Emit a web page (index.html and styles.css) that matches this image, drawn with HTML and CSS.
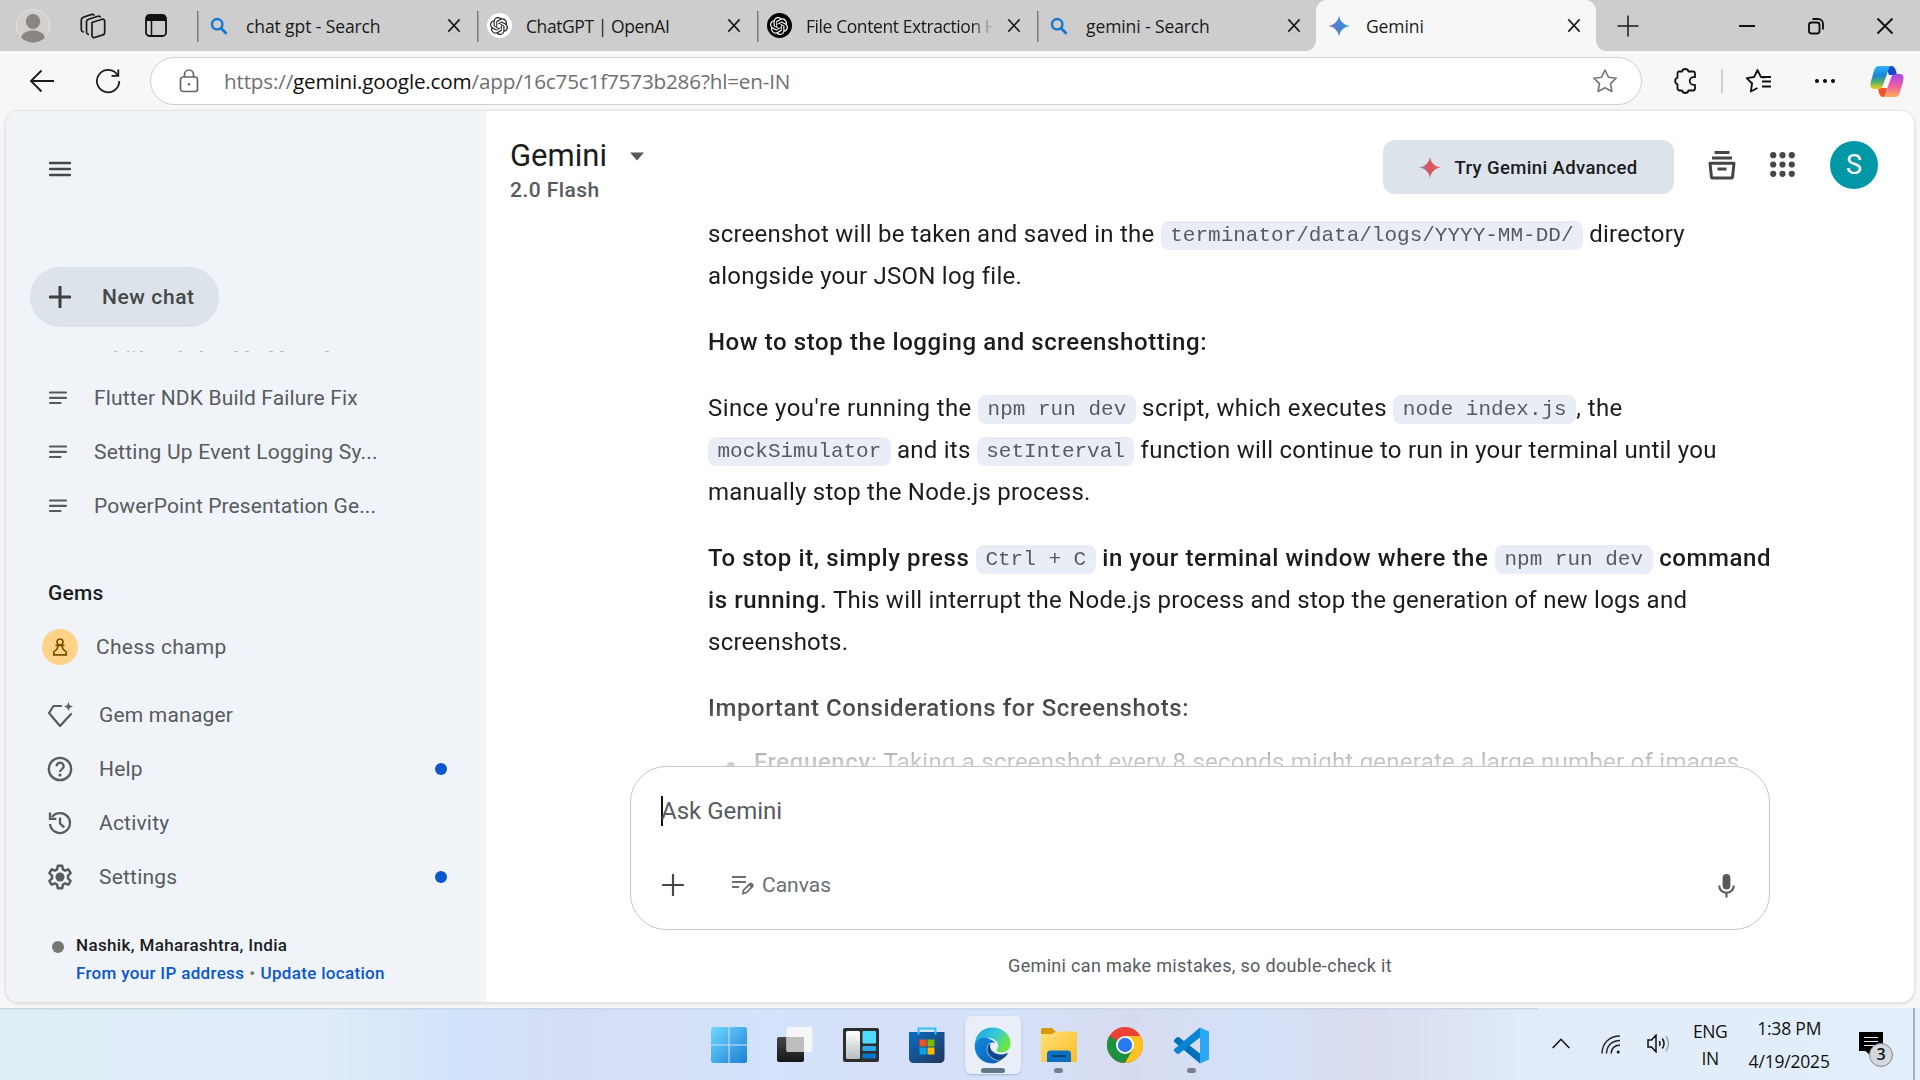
FILE: index.html
```html
<!DOCTYPE html>
<html lang="en">
<head>
<meta charset="utf-8">
<title>Gemini</title>
<link rel="stylesheet" href="styles.css">
</head>
<body>
<svg class="defs" width="0" height="0" aria-hidden="true">
  <defs>
    <linearGradient id="gSpark" x1="0" y1="0" x2="1" y2="0"><stop offset="0" stop-color="#9168c0"/><stop offset=".5" stop-color="#4a83d6"/><stop offset="1" stop-color="#1ba1e3"/></linearGradient>
    <linearGradient id="gSparkRed" x1="0" y1="0" x2="1" y2="0"><stop offset="0" stop-color="#8c7bd0"/><stop offset=".45" stop-color="#d6555c"/><stop offset="1" stop-color="#e8645a"/></linearGradient>
    <linearGradient id="gCopA" x1="0" y1="0" x2="0" y2="1"><stop offset="0" stop-color="#2fb5f5"/><stop offset=".4" stop-color="#1684d8"/><stop offset=".7" stop-color="#54b265"/><stop offset="1" stop-color="#f5cf1a"/></linearGradient>
    <linearGradient id="gCopB" x1="0" y1="0" x2="0" y2="1"><stop offset="0" stop-color="#a04be8"/><stop offset=".5" stop-color="#ee5aa5"/><stop offset="1" stop-color="#ffae57"/></linearGradient>
    <linearGradient id="gWin" x1="0" y1="0" x2="1" y2="1"><stop offset="0" stop-color="#72d8ff"/><stop offset="1" stop-color="#1b7fd6"/></linearGradient>
    <linearGradient id="gDark" x1="0" y1="0" x2="0" y2="1"><stop offset="0" stop-color="#474747"/><stop offset="1" stop-color="#161616"/></linearGradient>
    <linearGradient id="gGrey" x1="0" y1="0" x2="0" y2="1"><stop offset="0" stop-color="#ffffff"/><stop offset="1" stop-color="#b8bcc2"/></linearGradient>
    <linearGradient id="gStore" x1="0" y1="0" x2="1" y2="1"><stop offset="0" stop-color="#0a6cc0"/><stop offset="1" stop-color="#24355c"/></linearGradient>
    <linearGradient id="gEdgeTop" x1="0" y1="0" x2="1" y2=".5"><stop offset="0" stop-color="#1f9fd8"/><stop offset=".55" stop-color="#35c6dc"/><stop offset="1" stop-color="#6be83f"/></linearGradient>
    <linearGradient id="gEdgeLow" x1="0" y1="0" x2="1" y2="1"><stop offset="0" stop-color="#0f8ae0"/><stop offset="1" stop-color="#0b5cb3"/></linearGradient>
    <linearGradient id="gFolder" x1="0" y1="0" x2="1" y2="1"><stop offset="0" stop-color="#ffe07a"/><stop offset="1" stop-color="#fbbd26"/></linearGradient>
    <symbol id="close" viewBox="0 0 14 16"><path d="M1 1.500l12 13M13 1.500L1 14.500" fill="none" stroke="#1a1a1a" stroke-width="1.700"/></symbol>
    <symbol id="search" viewBox="0 0 18 18"><circle cx="7.200" cy="7.200" r="5.200" fill="none" stroke="#1577d2" stroke-width="2.400"/><path d="M11 11l4.800 5" stroke="#1577d2" stroke-width="2.800" stroke-linecap="round"/></symbol>
    <symbol id="spark" viewBox="0 0 24 24"><path d="M12 0C12.600 6.600 17.400 11.400 24 12 17.400 12.600 12.600 17.400 12 24 11.400 17.400 6.600 12.600 0 12 6.600 11.400 11.400 6.600 12 0Z"/></symbol>
    <symbol id="knot" viewBox="0 0 24 24"><path fill="currentColor" d="M22.282 9.821a5.985 5.985 0 0 0-.516-4.910 6.046 6.046 0 0 0-6.510-2.900A6.065 6.065 0 0 0 4.981 4.182a5.985 5.985 0 0 0-3.998 2.900 6.046 6.046 0 0 0 .743 7.097 5.980 5.980 0 0 0 .511 4.911 6.051 6.051 0 0 0 6.515 2.900A5.985 5.985 0 0 0 13.260 24a6.056 6.056 0 0 0 5.772-4.206 5.990 5.990 0 0 0 3.998-2.900 6.056 6.056 0 0 0-.748-7.073zM13.260 22.430a4.476 4.476 0 0 1-2.876-1.041l.142-.080 4.778-2.758a.795.795 0 0 0 .393-.681v-6.737l2.020 1.169a.071.071 0 0 1 .038.052v5.583a4.504 4.504 0 0 1-4.495 4.493zM3.600 18.304a4.471 4.471 0 0 1-.535-3.014l.142.085 4.783 2.759a.771.771 0 0 0 .780 0l5.843-3.369v2.332a.080.080 0 0 1-.033.062L9.740 19.950a4.500 4.500 0 0 1-6.140-1.646zM2.340 7.896a4.485 4.485 0 0 1 2.366-1.973V11.600a.766.766 0 0 0 .388.677l5.815 3.354-2.020 1.169a.076.076 0 0 1-.071 0l-4.830-2.787A4.504 4.504 0 0 1 2.340 7.872zm16.597 3.855l-5.833-3.387L15.119 7.200a.076.076 0 0 1 .071 0l4.830 2.791a4.494 4.494 0 0 1-.676 8.105v-5.678a.790.790 0 0 0-.407-.667zm2.010-3.023l-.141-.085-4.774-2.782a.776.776 0 0 0-.785 0L9.409 9.230V6.897a.066.066 0 0 1 .028-.061l4.830-2.787a4.500 4.500 0 0 1 6.680 4.660zM8.307 12.863l-2.020-1.164a.080.080 0 0 1-.038-.057V6.075a4.500 4.500 0 0 1 7.375-3.453l-.142.080L8.704 5.460a.795.795 0 0 0-.393.681zm1.097-2.365l2.602-1.500 2.607 1.500v2.999l-2.597 1.500-2.607-1.500z"/></symbol>
    <symbol id="lines" viewBox="0 0 18 14"><path d="M1 1.500h16M1 6.800h16M1 12h10.500" stroke="#575b5f" stroke-width="2.200" stroke-linecap="round"/></symbol>
  </defs>
</svg>

<div class="tabstrip">
  <div class="strip-tools">
    <svg width="34" height="34" viewBox="0 0 34 34"><circle cx="17" cy="17" r="16.500" fill="#d2d0cc" stroke="#e4e3e0"/><ellipse cx="17" cy="12.500" rx="7.200" ry="7.500" fill="#8b8681"/><path d="M5 28.500C7 23.500 11 21.500 17 21.500S27 23.500 29 28.500A16.500 16.500 0 0 1 5 28.500Z" fill="#8b8681"/></svg>
    <svg width="26" height="26" viewBox="0 0 26 26" fill="none" stroke="#1a1a1a" stroke-width="1.700"><path d="M12 9.500l10-3.200a2 2 0 0 1 2.700 1.900v11.300a2.500 2.500 0 0 1-1.800 2.400l-8.300 2.600A2 2 0 0 1 12 22.600Z"/><path d="M9 21.500a2.500 2.500 0 0 1-2.500-2.500V9a3 3 0 0 1 2-2.800l9.500-3a2.200 2.200 0 0 1 2.600 1.300"/><path d="M3.800 19a2.500 2.500 0 0 1-2.500-2.500V7a3 3 0 0 1 2-2.800l8.500-2.800a2.200 2.200 0 0 1 2.600 1.200"/></svg>
    <svg width="22" height="23" viewBox="0 0 22 23"><rect x="1" y="1" width="20" height="21" rx="3.500" fill="none" stroke="#111" stroke-width="1.800"/><path d="M1 7V4a3 3 0 0 1 3-3h14a3 3 0 0 1 3 3v3Z" fill="#111"/><path d="M6.500 7v15" stroke="#111" stroke-width="1.500"/></svg>
  </div>
  <div class="tab"><span class="fav"><svg width="18" height="18"><use href="#search"/></svg></span><span class="tab-title">chat gpt - Search</span><svg width="14" height="15"><use href="#close"/></svg></div>
  <div class="tab"><span class="fav"><span class="disc light"><svg width="18" height="18"><use href="#knot"/></svg></span></span><span class="tab-title tight">ChatGPT | OpenAI</span><svg width="14" height="15"><use href="#close"/></svg></div>
  <div class="tab"><span class="fav"><span class="disc dark"><svg width="18" height="18"><use href="#knot"/></svg></span></span><span class="tab-title tight faded">File Content Extraction H</span><svg width="14" height="15"><use href="#close"/></svg></div>
  <div class="tab"><span class="fav"><svg width="18" height="18"><use href="#search"/></svg></span><span class="tab-title">gemini - Search</span><svg width="14" height="15"><use href="#close"/></svg></div>
  <div class="tab active"><span class="fav"><svg width="22" height="24" fill="url(#gSpark)"><use href="#spark"/></svg></span><span class="tab-title">Gemini</span><svg width="14" height="15"><use href="#close"/></svg></div>
  <svg class="newtab" width="22" height="22" viewBox="0 0 22 22"><path d="M11 .5v21M.5 11h21" stroke="#1a1a1a" stroke-width="1.500"/></svg>
  <div class="winbtns">
    <svg width="18" height="18" viewBox="0 0 18 18"><path d="M1 9h16" stroke="#111" stroke-width="2"/></svg>
    <svg width="18" height="18" viewBox="0 0 18 18" fill="none" stroke="#111" stroke-width="1.900"><rect x="2" y="5.500" width="10.500" height="11" rx="2.500"/><path d="M5.500 2h5.500a5 5 0 0 1 5 5v5.500"/></svg>
    <svg width="18" height="18" viewBox="0 0 18 18"><path d="M1.500 1.500l15 15M16.500 1.500l-15 15" stroke="#111" stroke-width="1.900"/></svg>
  </div>
</div>

<div class="toolbar">
  <svg width="26" height="24" viewBox="0 0 26 24" fill="none" stroke="#1a1a1a" stroke-width="1.800"><path d="M25 12H2M12.500 1.500L2 12l10.500 10.500"/></svg>
  <svg class="reload" width="26" height="26" viewBox="0 0 26 26" fill="none" stroke="#1a1a1a" stroke-width="1.800"><path d="M22.500 7A11.200 11.200 0 1 0 24.300 13"/><path d="M23.300 1.500V7.800H16.500"/></svg>
  <div class="omnibox">
    <svg width="20" height="24" viewBox="0 0 20 24" fill="none" stroke="#666" stroke-width="1.700"><rect x="1.500" y="8" width="17" height="14.500" rx="2.500"/><path d="M5.500 8V5.500a4.500 4.500 0 0 1 9 0V8"/><circle cx="10" cy="15.200" r="1.200" fill="#666" stroke="none"/></svg>
    <span class="url">https://<b>gemini.google.com</b>/app/16c75c1f7573b286?hl=en-IN</span>
    <svg width="26" height="26" viewBox="0 0 26 26" fill="none" stroke="#767676" stroke-width="1.600" stroke-linejoin="round"><path d="M13 2l3.400 7.200 7.800 1-5.700 5.500 1.400 7.800L13 19.700l-6.900 3.800 1.400-7.800L1.800 10.200l7.800-1Z"/></svg>
  </div>
  <div class="tb-icons">
    <svg width="26" height="28" viewBox="0 0 26 28" fill="none" stroke="#111" stroke-width="1.800" stroke-linejoin="round"><path d="M6.500 4.500h3.600a3.300 3.300 0 0 1 6.400 0H21a2 2 0 0 1 2 2v3.700h-1.500a3.800 3.800 0 0 0 0 7.600H23v3.700a2 2 0 0 1-2 2h-4.500a3.300 3.300 0 0 1-6.400 0H7.500a2 2 0 0 1-2-2v-4.200a3.500 3.500 0 0 1 0-6.600V6.500a2 2 0 0 1 1-2Z"/></svg>
    <i class="vr"></i>
    <svg width="27" height="26" viewBox="0 0 27 26" fill="none" stroke="#111" stroke-width="1.800" stroke-linejoin="round"><path d="M20 9.500l-4.100-.5L12.500 2 9.200 9l-7.500 1.100 5.400 5.400-1.300 8 6.700-3.500M17 13.500h9M17 18.500h9M16 9h10"/></svg>
    <svg width="22" height="6" viewBox="0 0 22 6"><circle cx="3" cy="3" r="2"/><circle cx="11" cy="3" r="2"/><circle cx="19" cy="3" r="2"/></svg>
    <svg width="34" height="31" viewBox="0 0 34 31"><path d="M16 0h5c3 0 4 2 5 5l1 4h-8Z" fill="#1747c9"/><path d="M8 22h9l-2 9h-2c-3 0-4-3-5-9Z" fill="#f0552f"/><path d="M9 0h12c-2 1-3 4-4 8l-4 11c-1 3-2 4-5 4H4c-4 0-4-4-3-8L4 5c1-3 2-5 5-5Z" fill="url(#gCopA)"/><path d="M25 31H13c2-1 3-4 4-8l4-11c1-3 2-4 5-4h4c4 0 4 4 3 8l-3 10c-1 3-2 5-5 5Z" fill="url(#gCopB)"/></svg>
  </div>
</div>

<div class="frame">
  <div class="panel">
    <aside class="sidebar">
      <svg class="burger" width="22" height="16" viewBox="0 0 22 16"><path d="M1 2h20M1 8h20M1 14h20" stroke="#444746" stroke-width="2.400" stroke-linecap="round"/></svg>
      <div class="newchat"><svg width="22" height="22" viewBox="0 0 22 22"><path d="M11 1v20M1 11h20" stroke="#3c403f" stroke-width="3" stroke-linecap="round"/></svg><span>New chat</span></div>
      <svg class="cutrow" width="240" height="1" viewBox="0 0 240 1"><path d="M20 .5h3M33 .5h2M39 .5h2M46 .5h3M85 .5h3M106 .5h3M140 .5h4M151 .5h4M175 .5h4M186 .5h4M231 .5h4" stroke="#b9bdc2"/></svg>
      <div class="row chat"><svg width="18" height="14"><use href="#lines"/></svg><span>Flutter NDK Build Failure Fix</span></div>
      <div class="row chat"><svg width="18" height="14"><use href="#lines"/></svg><span class="loose">Setting Up Event Logging Sy...</span></div>
      <div class="row chat"><svg width="18" height="14"><use href="#lines"/></svg><span class="snug">PowerPoint Presentation Ge...</span></div>
      <h2 class="gems">Gems</h2>
      <div class="row gem"><span class="pawn"><svg width="16" height="18" viewBox="0 0 16 18" fill="none" stroke="#7a4f00" stroke-width="1.700"><circle cx="8" cy="4" r="3"/><path d="M3.500 7.300h9M6.300 7.500L5 11 1.800 14v2.800h12.400V14L11 11 9.700 7.500"/></svg></span><span>Chess champ</span></div>
      <div class="menu">
        <div class="row nav"><svg width="26" height="26" viewBox="0 0 26 26"><path d="M14 4H6.500L2 11l11 13 11-12" fill="none" stroke="#575b5f" stroke-width="2.200" stroke-linejoin="round" stroke-linecap="round"/><path d="M21.500 0l1.200 3.300L26 4.500l-3.300 1.200L21.500 9l-1.200-3.300L17 4.500l3.300-1.200Z" fill="#575b5f"/></svg><span>Gem manager</span></div>
        <div class="row nav"><svg width="26" height="26" viewBox="0 0 26 26" fill="none" stroke="#575b5f" stroke-width="2.300"><circle cx="13" cy="13" r="11.200"/><path d="M9.600 10.200a3.500 3.500 0 1 1 5.600 2.700c-1.400 1-2.100 1.600-2.100 3"/><circle cx="13" cy="19" r="1.600" fill="#575b5f" stroke="none"/></svg><span>Help</span><i class="dot"></i></div>
        <div class="row nav"><svg width="26" height="26" viewBox="0 0 26 26" fill="none" stroke="#575b5f" stroke-width="2.300"><path d="M3 14A10 10 0 1 0 5 7"/><path d="M3 2.500v6.300h6.300M13 7.500v6l4.300 3.800"/></svg><span>Activity</span></div>
        <div class="row nav"><svg width="26" height="26" viewBox="0 0 26 26" fill="none" stroke="#575b5f" stroke-width="2.500" stroke-linejoin="round"><path d="M10.800 1.800h4.400l.7 3.500 2.200 1.300 3.300-1.200 2.200 3.800-2.600 2.400v2.800l2.600 2.400-2.200 3.800-3.300-1.200-2.200 1.300-.7 3.500h-4.400l-.7-3.500-2.200-1.300-3.300 1.200-2.200-3.800L5 14.400v-2.800L2.400 9.200l2.200-3.800 3.300 1.200 2.200-1.300Z"/><circle cx="13" cy="13" r="4.500" fill="#575b5f" stroke="none"/></svg><span>Settings</span><i class="dot"></i></div>
      </div>
      <div class="location">
        <i class="geo"></i>
        <div><div class="place">Nashik, Maharashtra, India</div><div class="links"><a>From your IP address</a><i>•</i><a>Update location</a></div></div>
      </div>
    </aside>

    <main class="main">
      <header class="top">
        <div class="brand">
          <div class="name">Gemini<svg width="14" height="9" viewBox="0 0 14 9"><path d="M0 .5h14L7 8.500Z" fill="#575b5f"/></svg></div>
          <div class="model">2.0 Flash</div>
        </div>
        <div class="actions">
          <div class="try"><svg width="22" height="25" viewBox="0 0 24 24" fill="url(#gSparkRed)"><use href="#spark"/></svg><span>Try Gemini Advanced</span></div>
          <svg width="28" height="29" viewBox="0 0 28 29" fill="none" stroke="#444746" stroke-width="3"><path d="M6.500 1.600h15M4 7h20"/><path d="M2 12.200h24l-1.400 13.500a1.500 1.500 0 0 1-1.500 1.400H4.900a1.500 1.500 0 0 1-1.500-1.400Z" stroke-linejoin="round"/><path d="M9.500 18h9"/></svg>
          <svg width="25" height="25" viewBox="0 0 25 25" fill="#444746"><circle cx="3.200" cy="3.200" r="3.100"/><circle cx="12.500" cy="3.200" r="3.100"/><circle cx="21.800" cy="3.200" r="3.100"/><circle cx="3.200" cy="12.500" r="3.100"/><circle cx="12.500" cy="12.500" r="3.100"/><circle cx="21.800" cy="12.500" r="3.100"/><circle cx="3.200" cy="21.800" r="3.100"/><circle cx="12.500" cy="21.800" r="3.100"/><circle cx="21.800" cy="21.800" r="3.100"/></svg>
          <div class="avatar">S</div>
        </div>
      </header>

      <section class="chatview">
        <p>screenshot will be taken and saved in the <code>terminator/data/logs/YYYY-MM-DD/</code> directory<br>alongside your JSON log file.</p>
        <p><b>How to stop the logging and screenshotting:</b></p>
        <p><span class="airy">Since you're running the <code>npm run dev</code> script, which executes <code>node index.js</code>, the</span><br><code>mockSimulator</code> and its <code>setInterval</code> function will continue to run in your terminal until you<br>manually stop the Node.js process.</p>
        <p><b>To stop it, simply press <code>Ctrl + C</code> in your terminal window where the <code>npm run dev</code> command<br>is running.</b> This will interrupt the Node.js process and stop the generation of new logs and<br>screenshots.</p>
        <p class="last"><b>Important Considerations for Screenshots:</b></p>
        <ul><li><b>Frequency:</b> Taking a screenshot every 8 seconds might generate a large number of images</li></ul>
      </section>

      <div class="composer">
        <div class="prompt"><i class="caret"></i>Ask Gemini</div>
        <div class="tools">
          <svg width="22" height="22" viewBox="0 0 22 22"><path d="M11 1v20M1 11h20" stroke="#444746" stroke-width="2.200" stroke-linecap="round"/></svg>
          <svg class="canvas-i" width="23" height="20" viewBox="0 0 23 20"><path d="M1 2h14M1 7h14M1 12h7" stroke="#6b6f73" stroke-width="2.200"/><path d="M12 18.500l.6-3.400 6.300-6.300c1.500-1 3.700 1 2.600 2.700l-6.300 6.300Z" fill="none" stroke="#6b6f73" stroke-width="1.800"/><path d="M17.500 10l2-2 3 3-2 2Z" fill="#6b6f73"/></svg>
          <span>Canvas</span>
          <svg class="mic" width="17" height="25" viewBox="0 0 17 25"><rect x="4.600" y="1" width="7.800" height="15.500" rx="3.900" fill="#575b5f"/><path d="M1.200 12.500a7.300 7.300 0 0 0 14.600 0M8.500 20v4.500" fill="none" stroke="#575b5f" stroke-width="2.100"/></svg>
        </div>
      </div>
      <div class="note">Gemini can make mistakes, so double-check it</div>
    </main>
  </div>
</div>

<footer class="taskbar">
  <div class="apps">
    <span class="app"><svg width="36" height="36" viewBox="0 0 36 36" fill="url(#gWin)"><path d="M2.500 0H17.500V17.500H0V2.500A2.500 2.500 0 0 1 2.500 0ZM18.500 0H33.500A2.500 2.500 0 0 1 36 2.500V17.500H18.500ZM0 18.500H17.500V36H2.500A2.500 2.500 0 0 1 0 33.500ZM18.500 18.500H36V33.500A2.500 2.500 0 0 1 33.500 36H18.500Z"/></svg></span>
    <span class="app"><svg width="36" height="36" viewBox="0 0 36 36"><rect x="0" y="10" width="27" height="25" rx="2" fill="url(#gDark)"/><rect x="9.500" y="0" width="26" height="25" rx="2" fill="#f7f7f8" opacity=".96"/><path d="M9.500 10H27v15H11a1.500 1.500 0 0 1-1.500-1.500Z" fill="#bdbdbd"/></svg></span>
    <span class="app"><svg width="36" height="34" viewBox="0 0 36 34"><rect width="36" height="34" rx="2" fill="#2d2f2d"/><rect x="3" y="3" width="14" height="28" rx="1.500" fill="url(#gGrey)"/><rect x="19.500" y="3" width="13.500" height="12.500" rx="1" fill="#4edbff"/><rect x="19.500" y="18" width="13.500" height="5" rx="1" fill="#2ea9e8"/><rect x="19.500" y="25.500" width="13.500" height="5" rx="1" fill="#0a74d1"/></svg></span>
    <span class="app"><svg width="36" height="36" viewBox="0 0 36 36"><path d="M0 5h35.500v26.500A4.500 4.500 0 0 1 31 36H4.500A4.500 4.500 0 0 1 0 31.500Z" fill="url(#gStore)"/><path d="M9.500 7.500V1.500h17v6" fill="none" stroke="#2fc3f3" stroke-width="2"/><path d="M10.500 12.500h7v7h-7Z" fill="#f25022"/><path d="M18.500 12.500h7v7h-7Z" fill="#7fba00"/><path d="M10.500 20.500h7v7h-7Z" fill="#00a4ef"/><path d="M18.500 20.500h7v7h-7Z" fill="#ffb900"/></svg></span>
    <span class="app current"><svg width="37" height="37" viewBox="0 0 37 37"><path d="M1 16C2 6 10 .5 18.500 .5 29 .5 36.500 8 36.500 16c0 6-4 9.500-9 9.500-4 0-5.500-1.500-4.500-3 1-1.500 1.500-3 1-5-1-4-5-6.500-10-6.500C8 11 3 13 1 16Z" fill="url(#gEdgeTop)"/><path d="M1 16c2-4 7-6 12-5 4 1 7 3 8.500 5-6-2-10 3-8.500 8.500 1.500 6 7.500 9.500 13.500 9-3 2-5.500 3-8 3C8 36.500-1 28 1 16Z" fill="url(#gEdgeLow)"/><path d="M13.500 20c-1.500 7 4 12.500 12.500 13.500 3-1.500 5.500-3.500 7.500-6.500.4-.8-.3-1.200-1-.8-4 2-10 1.500-13.500-1.500-2.500-2-3.500-4.500-2.500-8-1.500.5-2.500 1.500-3 3.300Z" fill="#114a8b"/></svg><i></i></span>
    <span class="app run"><svg width="36" height="34" viewBox="0 0 36 34"><path d="M0 2a2 2 0 0 1 2-2h9l4 4h21v6H0Z" fill="#d99a00"/><path d="M0 6h11l4-2.500h21V34H0Z" fill="url(#gFolder)"/><path d="M6 34V26a3.500 3.500 0 0 1 3.500-3.500h17A3.500 3.500 0 0 1 30 26v8Z" fill="#0c70c0"/><path d="M11 28h14" stroke="#083f7d" stroke-width="2"/></svg><i></i></span>
    <span class="app"><svg width="36" height="36" viewBox="0 0 36 36"><circle cx="18" cy="18" r="18" fill="#ea4335"/><path d="M18 18L2.400 9A18 18 0 0 0 18 36L25.800 22.500Z" fill="#1e9141"/><path d="M18 9H33.600A18 18 0 0 1 18 36L25.800 22.500Z" fill="#fcc31f"/><circle cx="18" cy="18" r="9" fill="#fff"/><circle cx="18" cy="18" r="7.200" fill="#2b79ee"/></svg></span>
    <span class="app run"><svg width="36" height="37" viewBox="0 0 36 37"><path d="M1.500 12.500L4 10.300a1.600 1.600 0 0 1 2 0L27 26.500v10L1.300 15a1.800 1.800 0 0 1 .2-2.500Z" fill="#0070bb"/><path d="M1.500 24.500L4 26.700a1.600 1.600 0 0 0 2 0L27 10.500V.5L1.300 22a1.800 1.800 0 0 0 .2 2.500Z" fill="#0a84cf"/><path d="M27 .5L36 4.500v28L27 36.500Z" fill="#29a9f5"/></svg><i></i></span>
  </div>
  <div class="tray">
    <svg class="t1" width="18" height="11" viewBox="0 0 18 11"><path d="M.7 10L9 1.300 17.300 10" fill="none" stroke="#111" stroke-width="1.600"/></svg>
    <svg class="t2" width="20" height="19" viewBox="0 0 20 19" fill="none" stroke="#222" stroke-width="1.400"><path d="M1 18.500C1.200 8.500 8 1 19 1M5.500 18.500C5.700 11 10.500 5.700 19 5.500M10.200 18.500c.2-5 3-8.200 8.800-8.500"/><circle cx="17.200" cy="17" r="1.500" fill="#111" stroke="none"/></svg>
    <svg class="t3" width="23" height="19" viewBox="0 0 23 19" fill="none" stroke="#111" stroke-width="1.500"><path d="M1 6h3.500L9 1.200v16.600L4.500 13H1ZM12.300 7.200q1.500 2.300 0 4.600M15.300 4.500q3.500 5 0 10"/><path d="M19 2q5 7.500 0 15" stroke="#9aa3ab"/></svg>
    <div class="lang"><span>ENG</span><span>IN</span></div>
    <div class="clock"><span>1:38 PM</span><span>4/19/2025</span></div>
    <div class="notif"><svg width="24" height="24" viewBox="0 0 24 24"><path d="M0 0h24v19H12v5L6.500 19H0Z"/><path d="M5 5.500h14M5 9.500h14M5 13.500h14" stroke="#e2edf8" stroke-width="1.200"/></svg><b>3</b></div>
    <i class="peek"></i>
  </div>
</footer>
</body>
</html>
```

FILE: styles.css
```css
* { box-sizing: border-box; }
html, body { margin: 0; width: 1920px; height: 1080px; overflow: hidden; }
body { display: flex; flex-direction: column; background: #f7f7f7; font-family: Roboto, "Liberation Sans", sans-serif; color: #1b1c1d; }
svg { display: block; flex: none; }
i { font-style: normal; flex: none; }
.defs { position: absolute; }

/* tab strip */
.tabstrip { height: 51px; flex: none; display: flex; align-items: center; background: #cdcdcd; font-family: "Open Sans", "Noto Sans", sans-serif; }
.strip-tools { width: 196px; flex: none; display: flex; align-items: center; padding-left: 16px; }
.strip-tools svg:nth-child(2) { margin-left: 30px; }
.strip-tools svg:nth-child(3) { margin-left: 39px; }
.tab { width: 280px; height: 51px; flex: none; display: flex; align-items: center; padding-right: 15px; background: linear-gradient(#7b7b7b, #7b7b7b) .5px 11px / 1.500px 31px no-repeat; }
.fav { width: 46px; flex: none; display: flex; justify-content: center; }
.disc { width: 25px; height: 25px; border-radius: 50%; display: flex; align-items: center; justify-content: center; }
.light { background: #fff; color: #222; }
.dark { background: #000; color: #fff; }
.tab-title { flex: 1; min-width: 0; margin-left: 4px; overflow: hidden; white-space: nowrap; font-size: 17.500px; letter-spacing: -.1px; color: #1a1a1a; line-height: 30px; }
.tight { letter-spacing: -.42px; }
.faded { margin-right: 13px; -webkit-mask-image: linear-gradient(90deg, #000 88%, transparent); mask-image: linear-gradient(90deg, #000 88%, transparent); }
.active { background: #f7f7f7; border-radius: 11px 11px 0 0; position: relative; }
.active::before, .active::after { content: ""; position: absolute; bottom: 0; width: 10px; height: 10px; }
.active::before { left: -10px; background: radial-gradient(circle at 0 0, transparent 9.500px, #f7f7f7 10px); }
.active::after { right: -10px; background: radial-gradient(circle at 100% 0, transparent 9.500px, #f7f7f7 10px); }
.newtab { margin-left: 21px; }
.winbtns { margin-left: auto; padding-right: 26px; display: flex; gap: 51px; }

/* address toolbar */
.toolbar { height: 59px; flex: none; display: flex; align-items: center; padding: 1px 0 0 29px; }
.reload { margin-left: 40px; }
.omnibox { width: 1492px; height: 48px; margin-left: 29px; display: flex; align-items: center; padding: 0 23px 0 28px; background: #fff; border: 1.500px solid #cfcfcf; border-radius: 24px; }
.url { flex: 1; margin-left: 25px; font-family: "Open Sans", "Noto Sans", sans-serif; font-size: 20.700px; letter-spacing: -.19px; color: #6f6f6f; white-space: nowrap; }
.url b { font-weight: 400; color: #111; }
.tb-icons { display: flex; align-items: center; flex: 1; padding-left: 30px; }
.vr { width: 1.500px; height: 24px; margin: 0 22px 0 23px; background: #cfcfcf; }
.tb-icons svg:nth-child(4) { margin-left: 42px; }
.tb-icons svg:nth-child(5) { margin-left: 34px; }

/* page frame */
.frame { height: 898px; flex: none; padding: 0 5px 6px; }
.panel { height: 893px; display: flex; background: #fff; border: 1px solid #e4e4e4; border-radius: 14px; overflow: hidden; box-shadow: 0 1px 3px rgba(0, 0, 0, .12); }

/* sidebar */
.sidebar { width: 480px; flex: none; background: #f0f4f9; padding: 50px 0 0 24px; font-size: 21px; color: #575b5f; }
.burger { margin-left: 19px; }
.newchat { width: 189px; height: 60px; margin-top: 90px; padding-left: 19px; display: flex; align-items: center; gap: 31px; border-radius: 30px; background: #dde3ea; font-weight: 500; letter-spacing: .6px; color: #444746; white-space: nowrap; }
.cutrow { margin: 24px 0 19px 64px; }
.row { height: 54px; display: flex; align-items: center; white-space: nowrap; }
.chat { padding-left: 19px; }
.chat span { margin-left: 27px; letter-spacing: .15px; }
.chat .loose { letter-spacing: .24px; }
.chat .snug { letter-spacing: .11px; }
.gems { margin: 47px 0 13px 18px; font-size: 21px; line-height: 27px; font-weight: 500; letter-spacing: .2px; color: #1b1c1d; }
.gem { padding-left: 12px; }
.pawn { width: 36px; height: 36px; display: flex; align-items: center; justify-content: center; border-radius: 50%; background: #ffd28a; }
.gem span + span { margin-left: 18px; letter-spacing: .28px; }
.menu { margin-top: 14px; }
.nav { padding-left: 17px; letter-spacing: .2px; }
.nav span { flex: 1; margin-left: 26px; }
.dot { width: 12px; height: 12px; margin-right: 39px; border-radius: 50%; background: #0b57d0; }
.location { margin-top: 27px; padding-left: 22px; display: flex; gap: 12px; font-size: 17px; line-height: 28px; font-weight: 500; white-space: nowrap; }
.geo { width: 12px; height: 12px; margin-top: 10px; border-radius: 50%; background: #747775; }
.place { color: #1b1c1d; letter-spacing: .35px; }
.links { color: #0b57d0; letter-spacing: .32px; }
.links i { margin: 0 5px; color: #747775; }

/* main column */
.main { flex: 1; min-width: 0; display: flex; flex-direction: column; }
.top { height: 99px; flex: none; display: flex; justify-content: space-between; padding: 25px 36px 0 24px; }
.name { display: flex; align-items: center; gap: 23px; font-size: 31px; line-height: 38px; margin-top: 1px; }
.model { margin-top: 3px; font-size: 21px; line-height: 24px; font-weight: 500; letter-spacing: .45px; color: #575b5f; }
.actions { display: flex; align-items: flex-start; }
.actions > svg { margin-top: 16px; margin-left: 34px; }
.actions > .try + svg { margin-top: 15px; }
.try { width: 291px; height: 54px; margin-top: 4px; padding-top: 1px; display: flex; align-items: center; justify-content: center; gap: 13px; border-radius: 12px; background: #dde3ea; font-size: 18.500px; font-weight: 500; letter-spacing: .38px; white-space: nowrap; }
.avatar { width: 48px; height: 48px; margin: 5px 0 0 35px; border-radius: 50%; background: #0097a7; color: #fff; font-size: 27px; line-height: 48px; text-align: center; }

.chatview { height: 556px; flex: none; padding: 3px 0 0 222px; overflow: hidden; font-size: 24px; line-height: 42px; letter-spacing: .24px; white-space: nowrap;
  -webkit-mask-image: linear-gradient(#000 83%, rgba(0, 0, 0, .8) 89.500%, rgba(0, 0, 0, .2) 100%); mask-image: linear-gradient(#000 83%, rgba(0, 0, 0, .8) 89.500%, rgba(0, 0, 0, .2) 100%); }
.chatview p { margin: 0 0 24px; }
.chatview p.last { margin-bottom: 12px; }
.chatview b { font-weight: 500; letter-spacing: .59px; }
.chatview .airy { letter-spacing: .42px; }
.chatview code { display: inline-block; height: 29px; padding: 0 9.500px; vertical-align: middle; border-radius: 8px; background: #e9eef6; font: 400 21px/29px "Liberation Mono", monospace; letter-spacing: 0; color: #575b5f; }
.chatview ul { margin: 0; padding-left: 19px; list-style: none; }
.chatview li { display: flex; align-items: center; white-space: pre; }
.chatview li::before { content: ""; width: 8px; height: 8px; margin: 7px 19px 0 0; border-radius: 50%; background: #1b1c1d; }

.composer { width: 1140px; height: 164px; flex: none; margin-left: 144px; padding: 24px 34px 0 30px; border: 1px solid #c4c7c5; border-radius: 36px; }
.prompt { display: flex; align-items: center; height: 40px; font-size: 24px; color: #575b5f; }
.caret { width: 2px; height: 30px; margin-right: -2px; background: #111; }
.tools { display: flex; align-items: center; height: 40px; margin-top: 34px; padding-left: 1px; font-size: 21px; color: #6b6f73; }
.canvas-i { margin-left: 47px; }
.tools span { margin-left: 8px; }
.mic { margin-left: auto; }
.note { margin: 24px 0 0 144px; width: 1140px; text-align: center; font-size: 18px; line-height: 24px; letter-spacing: .33px; color: #575b5f; }

/* taskbar */
.taskbar { height: 72px; flex: none; display: flex; font-family: "Open Sans", "Noto Sans", sans-serif; background: linear-gradient(#c9d5e8, #c9d5e8) 0 0 / 1538px 1.500px no-repeat, linear-gradient(90deg, #e0eef8 0, #e0edf8 17%, #d0e2fa 24%, #d5def6 29%, #d5dff7 35%, #d2e3fb 40%, #d6dff7 46%, #d5e1fa 52%, #d6dcef 59%, #d5e1f9 65%, #d8dcee 71%, #dce4f4 76%, #e1ecf8 79%, #e2eef9 100%); }
.apps { display: flex; gap: 10.100px; margin-left: 700.500px; padding-top: 8px; }
.app { width: 56px; height: 58px; display: flex; flex-direction: column; align-items: center; justify-content: center; border-radius: 6px; position: relative; }
.current { background: #e9eef9; box-shadow: 0 1px 2px rgba(80, 100, 150, .35); }
.app i { position: absolute; bottom: 1px; width: 9px; height: 5px; border-radius: 3px; background: #7b7f8b; }
.current i { width: 24px; background: #5f7884; }
.tray { flex: 1; display: flex; font-size: 17.500px; color: #111; }
.t1 { margin: 30px 0 0 333px; }
.t2 { margin: 27px 0 0 31px; }
.t3 { margin: 26px 0 0 26px; }
.lang, .clock { display: flex; flex-direction: column; align-items: center; white-space: nowrap; }
.lang { width: 40px; margin-left: 20px; padding-top: 10px; line-height: 27px; letter-spacing: -.5px; }
.clock { width: 90px; margin-left: 14px; padding-top: 4px; line-height: 32.500px; letter-spacing: -.2px; }
.notif { position: relative; width: 24px; margin: 24px 0 0 25px; }
.notif b { position: absolute; left: 10px; top: 11px; width: 24px; height: 24px; border: 1.500px solid #84898e; border-radius: 50%; background: #d3d6da; font-size: 16px; line-height: 21px; font-weight: 600; text-align: center; }
.peek { width: 1.500px; margin-left: 30px; background: #a9b5bd; }
```
